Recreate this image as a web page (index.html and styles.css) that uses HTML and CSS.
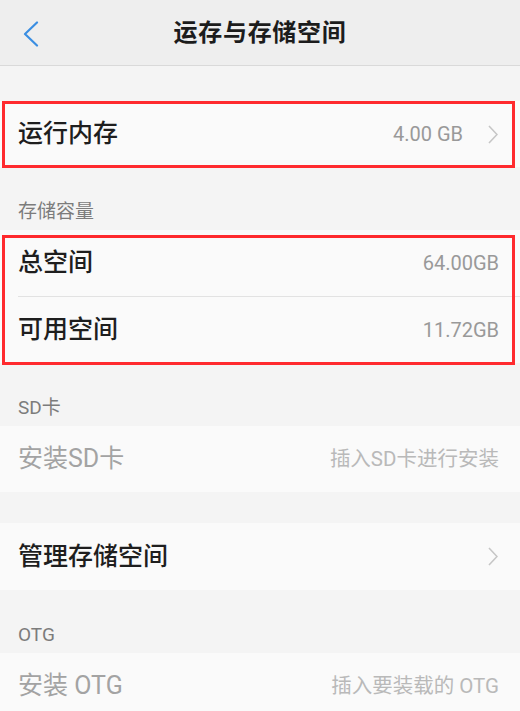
FILE: index.html
```html
<!DOCTYPE html>
<html lang="zh-CN">
<head>
<meta charset="utf-8">
<title>运存与存储空间</title>
<link rel="stylesheet" href="styles.css">
</head>
<body>
<div class="page">
  <header class="header">
    <svg class="back" width="16" height="26" viewBox="0 0 16 26"><polyline points="14,1.5 2,13 14,24.5" fill="none" stroke="#3a8ee2" stroke-width="2.2" stroke-linecap="round" stroke-linejoin="round"/></svg>
    <h1 class="title">运存与存储空间</h1>
  </header>

  <div class="gap-top"></div>

  <div class="group mark mark-1">
    <div class="row">
      <span class="name">运行内存</span>
      <span class="value">4.00 GB</span>
      <svg class="chev" width="10" height="19" viewBox="0 0 10 19"><polyline points="1,1 9,9.5 1,18" fill="none" stroke="#c6c6c6" stroke-width="1.6"/></svg>
    </div>
  </div>

  <div class="label">存储容量</div>
  <div class="group mark mark-2">
    <div class="row plain">
      <span class="name">总空间</span>
      <span class="value">64.00GB</span>
    </div>
    <div class="divider"></div>
    <div class="row plain">
      <span class="name">可用空间</span>
      <span class="value">11.72GB</span>
    </div>
  </div>

  <div class="label">SD卡</div>
  <div class="group">
    <div class="row plain disabled">
      <span class="name">安装SD卡</span>
      <span class="value">插入SD卡进行安装</span>
    </div>
  </div>

  <div class="gap-mid"></div>

  <div class="group">
    <div class="row tall">
      <span class="name">管理存储空间</span>
      <svg class="chev" width="10" height="19" viewBox="0 0 10 19"><polyline points="1,1 9,9.5 1,18" fill="none" stroke="#c6c6c6" stroke-width="1.6"/></svg>
    </div>
  </div>

  <div class="label">OTG</div>
  <div class="group">
    <div class="row plain disabled">
      <span class="name">安装 OTG</span>
      <span class="value">插入要装载的 OTG</span>
    </div>
  </div>
</div>
</body>
</html>
```

FILE: styles.css
```css
html, body {
  margin: 0;
  padding: 0;
  background: #f4f4f4;
}
body {
  font-family: Roboto, "Noto Sans CJK SC", "Noto Sans", sans-serif;
  color: #222;
  overflow: hidden;
}
.page {
  width: 520px;
  height: 711px;
  overflow: hidden;
}
.header {
  height: 65px;
  background: #eeeeee;
  border-bottom: 1px solid #d9d9d9;
  display: flex;
  align-items: center;
  justify-content: center;
  position: relative;
}
.back {
  position: absolute;
  left: 23px;
  top: 21px;
}
.title {
  margin: 0;
  font-size: 24px;
  font-weight: 700;
  color: #1c1c1c;
  letter-spacing: 0.7px;
  line-height: 30px;
  padding-top: 1px;
}
.gap-top { height: 35px; }
.gap-mid { height: 31px; }
.group {
  background: #fafafa;
  position: relative;
}
.mark::after {
  content: "";
  position: absolute;
  left: 2px;
  right: 5px;
  border: 3px solid #ff2a2e;
  pointer-events: none;
}
.mark-1::after { top: 0; bottom: -1px; }
.mark-2::after { top: 5px; bottom: -2px; }
.row {
  height: 66px;
  display: flex;
  align-items: center;
  padding: 0 22px 0 18px;
}
.row.tall { height: 67px; }
.row.plain { padding-right: 21px; }
.name {
  font-size: 25px;
  line-height: 30px;
  font-weight: 500;
  color: #1e1e1e;
  flex: 1;
}
.value {
  font-size: 20px;
  line-height: 24px;
  color: #999999;
}
.chev {
  margin-left: 25px;
  flex: none;
}
.divider {
  height: 1px;
  margin-left: 18px;
  background: #e2e2e2;
}
.disabled .name { color: #a3a3a3; font-weight: 400; }
.disabled .value { color: #b9b9b9; font-size: 20.5px; }
.label {
  height: 63px;
  box-sizing: border-box;
  display: flex;
  align-items: flex-end;
  padding: 0 0 6px 18px;
  font-size: 19px;
  line-height: 24px;
  color: #7c7c7c;
}
```
